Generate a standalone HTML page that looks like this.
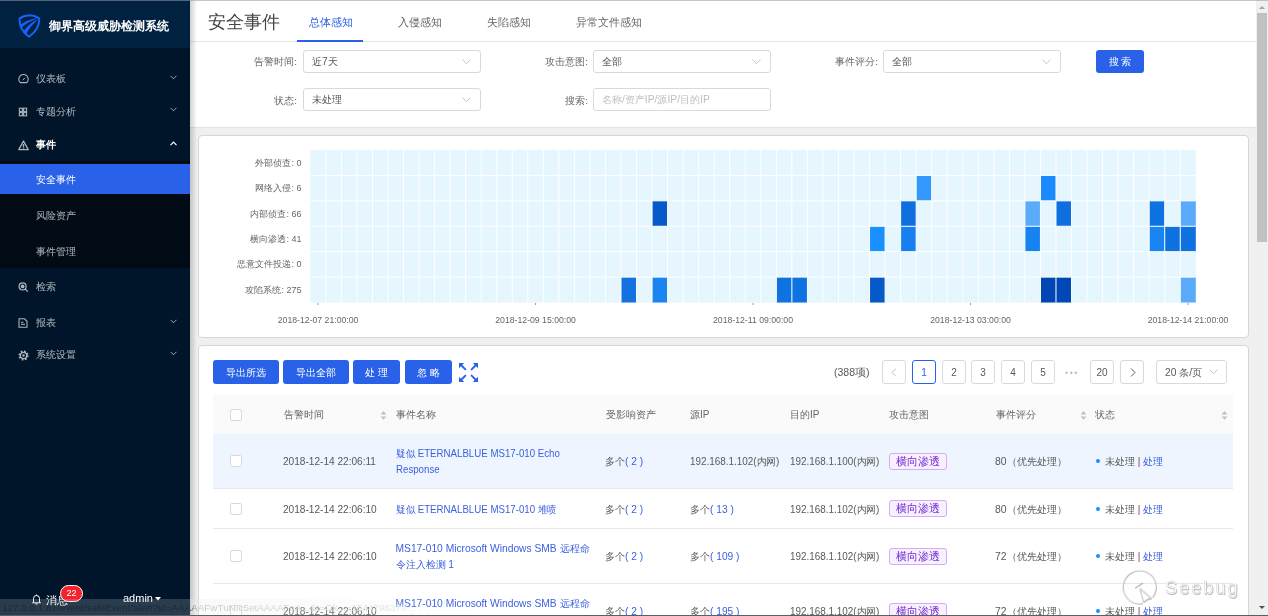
<!DOCTYPE html>
<html><head><meta charset="utf-8">
<style>
*{box-sizing:border-box;margin:0;padding:0}
html,body{width:1268px;height:616px;overflow:hidden;background:#f0f0f0;font-family:"Liberation Sans",sans-serif;color:#595959;position:relative}
.abs{position:absolute}
#side{position:absolute;left:0;top:0;width:190px;height:616px;background:#001529}
#logo{position:absolute;left:0;top:0;width:190px;height:48px;background:#00213f}
#logo .t{position:absolute;left:49px;top:18.7px;font-size:11.7px;font-weight:bold;color:#fff;white-space:nowrap;line-height:14px}
#side .tx{position:absolute;left:36px;font-size:10.1px;line-height:14px;white-space:nowrap}
#side .ic{position:absolute;left:18px;line-height:0}
#side .chev{position:absolute;left:170px;line-height:0}
#sub{position:absolute;left:0;top:161px;width:190px;height:107px;background:#000b16}
#act{position:absolute;left:0;top:164px;width:190px;height:30px;background:#2962e8}
#top{position:absolute;left:190px;top:0;width:1066px;height:128px;background:#fff;border-bottom:1px solid #dce2ee}
#tabline{position:absolute;left:190px;top:41px;width:1066px;height:1px;background:#e6e6e6}
#shadow{position:absolute;left:190px;top:0;width:7px;height:616px;background:linear-gradient(to right,rgba(0,0,0,0.18),rgba(0,0,0,0))}
.card{position:absolute;background:#fff;border:1px solid #d6d6d6;border-radius:4px}
.sel{position:absolute;height:23px;border:1px solid #d9d9d9;border-radius:3px;background:#fff;font-size:10.3px;line-height:22.5px;padding-left:8px;color:#595959;white-space:nowrap}
.sel svg{position:absolute;right:9px;top:8px}
.lbl{position:absolute;font-size:9.9px;line-height:14px;color:#666;white-space:nowrap;text-align:right;width:80px}
.btn{position:absolute;background:#2962e8;color:#fff;border-radius:3px;font-size:10.1px;text-align:center;white-space:nowrap;height:24px;line-height:25px}
.tab{position:absolute;top:15.4px;font-size:10.65px;line-height:14px;color:#666;white-space:nowrap}
.ylab{position:absolute;right:966.5px;font-size:9px;line-height:12px;color:#666;white-space:nowrap;text-align:right}
.xlab{position:absolute;top:314px;width:120px;text-align:center;font-size:8.7px;line-height:12px;color:#666;white-space:nowrap}
.pg{position:absolute;top:360px;width:24px;height:24px;border:1px solid #d9d9d9;border-radius:3px;background:#fff;font-size:10px;line-height:24px;text-align:center;color:#595959}
.th{position:absolute;top:408px;font-size:10px;line-height:14px;color:#666;white-space:nowrap}
.td{position:absolute;font-size:10.2px;line-height:15.5px;color:#595959;white-space:nowrap}
.link{color:#3a5fe0}
.num{color:#3a5fe0}
.cb{position:absolute;left:230px;width:12px;height:12px;border:1px solid #d9d9d9;border-radius:2px;background:#fff}
.tag{position:absolute;left:889px;width:58px;height:17px;border:1px solid #d3adf7;background:#f9f0ff;color:#722ed1;border-radius:3px;font-size:10.7px;line-height:15px;text-align:center;white-space:nowrap}
.dot{position:absolute;left:1096px;width:4px;height:4px;border-radius:50%;background:#1890ff}
.sorter{position:absolute;top:410px;line-height:0}
#wrap{position:absolute;left:0;top:0;width:1268px;height:616px;will-change:transform}
</style></head><body><div id="wrap">
<div id="side">
  <div id="logo">
    <svg class="abs" style="left:18px;top:14px" width="23" height="24" viewBox="0 0 23 24">
      <path d="M11.5 1.2 C7 1.5 3.5 3 1.5 4.5 C1.3 10 3 17 11 22.8 C19 17 21.5 10 21.3 4.5 C19.5 3 16 1.5 11.5 1.2 Z" fill="none" stroke="#1762ff" stroke-width="1.9"/>
      <path d="M1.6 11.8 C6 7.8 12 5 19.8 4.3 C13.5 6.8 7.5 10 2.3 14.6 Z" fill="#1762ff"/>
      <path d="M4.8 18.6 C8.5 12.5 13.5 7.8 20.3 5.2 C15.5 9.2 11.2 14 7.8 20.8 Z" fill="#1762ff"/>
    </svg>
    <div class="t">御界高级威胁检测系统</div>
  </div>
  <div id="sub"></div>
  <div id="act"></div>
  <div class="tx" style="top:72.0px;color:rgba(255,255,255,0.68);font-weight:normal">仪表板</div><div class="ic" style="top:74.0px;color:rgba(255,255,255,0.68)"><svg width="11" height="10" viewBox="0 0 11 10"><path d="M2.2 8.6 Q0.8 7.4 0.8 5.2 A4.7 4.7 0 0 1 10.2 5.2 Q10.2 7.4 8.8 8.6 Z" fill="none" stroke="currentColor" stroke-width="1.1"/><path d="M4.8 6.2 L6.8 3.8" stroke="currentColor" stroke-width="1"/></svg></div><div class="chev" style="top:74.5px;color:rgba(255,255,255,0.6)"><svg width="7" height="5" viewBox="0 0 7 5"><path d="M0.5 0.8 L3.5 3.8 L6.5 0.8" fill="none" stroke="currentColor" stroke-width="1"/></svg></div><div class="tx" style="top:104.9px;color:rgba(255,255,255,0.68);font-weight:normal">专题分析</div><div class="ic" style="top:106.9px;color:rgba(255,255,255,0.68)"><svg width="10" height="10" viewBox="0 0 10 10"><rect x="1.4" y="1.2" width="3" height="3.2" fill="none" stroke="currentColor" stroke-width="1.1"/><rect x="5.6" y="1.2" width="3" height="3.2" fill="none" stroke="currentColor" stroke-width="1.1"/><rect x="1.4" y="5.6" width="3" height="3.2" fill="none" stroke="currentColor" stroke-width="1.1"/><rect x="5.6" y="5.6" width="3" height="3.2" fill="none" stroke="currentColor" stroke-width="1.1"/></svg></div><div class="chev" style="top:107.4px;color:rgba(255,255,255,0.6)"><svg width="7" height="5" viewBox="0 0 7 5"><path d="M0.5 0.8 L3.5 3.8 L6.5 0.8" fill="none" stroke="currentColor" stroke-width="1"/></svg></div><div class="tx" style="top:137.7px;color:#fff;font-weight:bold">事件</div><div class="ic" style="top:139.7px;color:rgba(255,255,255,0.68)"><svg width="11" height="11" viewBox="0 0 11 11"><path d="M5.5 1 L10.2 9.6 L0.8 9.6 Z" fill="none" stroke="currentColor" stroke-width="1.3" stroke-linejoin="round"/><rect x="4.8" y="4" width="1.4" height="2.8" fill="currentColor"/><rect x="4.8" y="7.4" width="1.4" height="1.2" fill="currentColor"/></svg></div><div class="chev" style="top:141.2px;color:#fff"><svg width="7" height="5" viewBox="0 0 7 5"><path d="M0.5 4.2 L3.5 1.2 L6.5 4.2" fill="none" stroke="currentColor" stroke-width="1.2"/></svg></div><div class="tx" style="top:172.8px;color:#fff;font-weight:normal">安全事件</div><div class="tx" style="top:208.7px;color:rgba(255,255,255,0.68);font-weight:normal">风险资产</div><div class="tx" style="top:244.5px;color:rgba(255,255,255,0.68);font-weight:normal">事件管理</div><div class="tx" style="top:280.4px;color:rgba(255,255,255,0.68);font-weight:normal">检索</div><div class="ic" style="top:282.4px;color:rgba(255,255,255,0.68)"><svg width="11" height="10" viewBox="0 0 11 10"><circle cx="4.6" cy="4.4" r="3.5" fill="none" stroke="currentColor" stroke-width="1.2"/><circle cx="4.6" cy="4.4" r="1.9" fill="currentColor"/><path d="M7.2 7 L9.8 9.6" stroke="currentColor" stroke-width="1.2"/></svg></div><div class="tx" style="top:316.0px;color:rgba(255,255,255,0.68);font-weight:normal">报表</div><div class="ic" style="top:318.0px;color:rgba(255,255,255,0.68)"><svg width="10" height="10" viewBox="0 0 10 10"><path d="M1 0.8 L6.5 0.8 L9 3.3 L9 9.3 L1 9.3 Z" fill="none" stroke="currentColor" stroke-width="1.1"/><rect x="3" y="3.8" width="2.5" height="1" fill="currentColor"/><rect x="3" y="5.8" width="4" height="1" fill="currentColor"/></svg></div><div class="chev" style="top:318.5px;color:rgba(255,255,255,0.6)"><svg width="7" height="5" viewBox="0 0 7 5"><path d="M0.5 0.8 L3.5 3.8 L6.5 0.8" fill="none" stroke="currentColor" stroke-width="1"/></svg></div><div class="tx" style="top:348.0px;color:rgba(255,255,255,0.68);font-weight:normal">系统设置</div><div class="ic" style="top:350.0px;color:rgba(255,255,255,0.68)"><svg width="11" height="11" viewBox="0 0 11 11"><circle cx="5.5" cy="5.5" r="4.3" fill="none" stroke="currentColor" stroke-width="1.6" stroke-dasharray="1.7 1.68"/><circle cx="5.5" cy="5.5" r="3.2" fill="none" stroke="currentColor" stroke-width="1.3"/><circle cx="5.5" cy="5.5" r="1.2" fill="currentColor"/></svg></div><div class="chev" style="top:350.5px;color:rgba(255,255,255,0.6)"><svg width="7" height="5" viewBox="0 0 7 5"><path d="M0.5 0.8 L3.5 3.8 L6.5 0.8" fill="none" stroke="currentColor" stroke-width="1"/></svg></div>
  <svg class="abs" style="left:32px;top:594px" width="9" height="11" viewBox="0 0 9 11"><path d="M1.5 8 L1.5 4.5 A3 3 0 0 1 7.5 4.5 L7.5 8 L8.5 8.8 L0.5 8.8 Z" fill="none" stroke="#fff" stroke-width="1"/><path d="M3.5 10 L5.5 10" stroke="#fff" stroke-width="1"/><path d="M4.5 0.5 L4.5 1.6" stroke="#fff" stroke-width="1"/></svg>
  <div class="abs" style="left:46px;top:593px;font-size:10.7px;line-height:14px;color:#fff;white-space:nowrap">消息</div>
  <div class="abs" style="left:60px;top:585px;width:23px;height:17px;border-radius:9px;background:#f5222d;border:1px solid #fff;color:#fff;font-size:9px;line-height:15px;text-align:center">22</div>
  <div class="abs" style="left:123px;top:591px;font-size:11px;line-height:14px;color:#fff;white-space:nowrap">admin</div>
  <svg class="abs" style="left:155px;top:597px" width="6" height="4" viewBox="0 0 6 4"><path d="M0 0 L6 0 L3 3.5 Z" fill="#fff"/></svg>
</div>
<div id="top"></div>
<div id="tabline"></div>
<div class="abs" style="left:208px;top:11px;font-size:17.7px;line-height:22px;color:#444;white-space:nowrap">安全事件</div>
<div class="tab" style="left:308.5px;color:#2962e8">总体感知</div>
<div class="abs" style="left:297px;top:40px;width:66px;height:2px;background:#2962e8"></div>
<div class="tab" style="left:397.5px">入侵感知</div>
<div class="tab" style="left:486.5px">失陷感知</div>
<div class="tab" style="left:575.5px">异常文件感知</div>

<div class="lbl" style="left:217px;top:55px">告警时间:</div>
<div class="sel" style="left:303px;top:50px;width:178px">近7天<svg width="9" height="6" viewBox="0 0 9 6"><path d="M0.5 0.5 L4.5 4.8 L8.5 0.5" fill="none" stroke="#bfbfbf" stroke-width="0.9"/></svg></div>
<div class="lbl" style="left:508px;top:55px">攻击意图:</div>
<div class="sel" style="left:593px;top:50px;width:178px">全部<svg width="9" height="6" viewBox="0 0 9 6"><path d="M0.5 0.5 L4.5 4.8 L8.5 0.5" fill="none" stroke="#bfbfbf" stroke-width="0.9"/></svg></div>
<div class="lbl" style="left:798px;top:55px">事件评分:</div>
<div class="sel" style="left:883px;top:50px;width:178px">全部<svg width="9" height="6" viewBox="0 0 9 6"><path d="M0.5 0.5 L4.5 4.8 L8.5 0.5" fill="none" stroke="#bfbfbf" stroke-width="0.9"/></svg></div>
<div class="btn" style="left:1096px;top:50px;width:48px;height:23px;line-height:23px">搜 索</div>
<div class="lbl" style="left:217px;top:94px">状态:</div>
<div class="sel" style="left:303px;top:88px;width:178px">未处理<svg width="9" height="6" viewBox="0 0 9 6"><path d="M0.5 0.5 L4.5 4.8 L8.5 0.5" fill="none" stroke="#bfbfbf" stroke-width="0.9"/></svg></div>
<div class="lbl" style="left:508px;top:94px">搜索:</div>
<div class="sel" style="left:593px;top:88px;width:178px;color:#bfbfbf">名称/资产IP/源IP/目的IP</div>

<div id="shadow"></div>

<div class="card" style="left:198px;top:135px;width:1051px;height:203px"></div>
<svg class="abs" style="left:0;top:0" width="1268" height="616" viewBox="0 0 1268 616">
<rect x="310.3" y="150.0" width="885.50" height="152.52" fill="#e6f6fe"/>
<rect x="916.16" y="175.42" width="15.54" height="25.42" fill="#3399ff"/>
<rect x="1040.44" y="175.42" width="15.54" height="25.42" fill="#1a8aff"/>
<rect x="652.07" y="200.84" width="15.54" height="25.42" fill="#0559c9"/>
<rect x="900.63" y="200.84" width="15.54" height="25.42" fill="#0e6fdf"/>
<rect x="1024.91" y="200.84" width="15.54" height="25.42" fill="#5aacfa"/>
<rect x="1055.98" y="200.84" width="15.54" height="25.42" fill="#0f6fe0"/>
<rect x="1149.19" y="200.84" width="15.54" height="25.42" fill="#0f72e2"/>
<rect x="1180.26" y="200.84" width="15.54" height="25.42" fill="#5aacfa"/>
<rect x="869.56" y="226.26" width="15.54" height="25.42" fill="#1890ff"/>
<rect x="900.63" y="226.26" width="15.54" height="25.42" fill="#1780f0"/>
<rect x="1024.91" y="226.26" width="15.54" height="25.42" fill="#1683f0"/>
<rect x="1149.19" y="226.26" width="15.54" height="25.42" fill="#1985f2"/>
<rect x="1164.72" y="226.26" width="15.54" height="25.42" fill="#0e72e0"/>
<rect x="1180.26" y="226.26" width="15.54" height="25.42" fill="#0e72e0"/>
<rect x="621.00" y="277.10" width="15.54" height="25.42" fill="#1371e0"/>
<rect x="652.07" y="277.10" width="15.54" height="25.42" fill="#1a85f0"/>
<rect x="776.35" y="277.10" width="15.54" height="25.42" fill="#0e72e0"/>
<rect x="791.88" y="277.10" width="15.54" height="25.42" fill="#0e72e0"/>
<rect x="869.56" y="277.10" width="15.54" height="25.42" fill="#0559c8"/>
<rect x="1040.44" y="277.10" width="15.54" height="25.42" fill="#0047b3"/>
<rect x="1055.98" y="277.10" width="15.54" height="25.42" fill="#0049b5"/>
<rect x="1180.26" y="277.10" width="15.54" height="25.42" fill="#5aacfa"/>
<rect x="325.34" y="150.0" width="1" height="152.52" fill="#fff"/>
<rect x="340.87" y="150.0" width="1" height="152.52" fill="#fff"/>
<rect x="356.41" y="150.0" width="1" height="152.52" fill="#fff"/>
<rect x="371.94" y="150.0" width="1" height="152.52" fill="#fff"/>
<rect x="387.48" y="150.0" width="1" height="152.52" fill="#fff"/>
<rect x="403.01" y="150.0" width="1" height="152.52" fill="#fff"/>
<rect x="418.55" y="150.0" width="1" height="152.52" fill="#fff"/>
<rect x="434.08" y="150.0" width="1" height="152.52" fill="#fff"/>
<rect x="449.62" y="150.0" width="1" height="152.52" fill="#fff"/>
<rect x="465.15" y="150.0" width="1" height="152.52" fill="#fff"/>
<rect x="480.69" y="150.0" width="1" height="152.52" fill="#fff"/>
<rect x="496.22" y="150.0" width="1" height="152.52" fill="#fff"/>
<rect x="511.75" y="150.0" width="1" height="152.52" fill="#fff"/>
<rect x="527.29" y="150.0" width="1" height="152.52" fill="#fff"/>
<rect x="542.83" y="150.0" width="1" height="152.52" fill="#fff"/>
<rect x="558.36" y="150.0" width="1" height="152.52" fill="#fff"/>
<rect x="573.89" y="150.0" width="1" height="152.52" fill="#fff"/>
<rect x="589.43" y="150.0" width="1" height="152.52" fill="#fff"/>
<rect x="604.97" y="150.0" width="1" height="152.52" fill="#fff"/>
<rect x="620.50" y="150.0" width="1" height="152.52" fill="#fff"/>
<rect x="636.04" y="150.0" width="1" height="152.52" fill="#fff"/>
<rect x="651.57" y="150.0" width="1" height="152.52" fill="#fff"/>
<rect x="667.11" y="150.0" width="1" height="152.52" fill="#fff"/>
<rect x="682.64" y="150.0" width="1" height="152.52" fill="#fff"/>
<rect x="698.17" y="150.0" width="1" height="152.52" fill="#fff"/>
<rect x="713.71" y="150.0" width="1" height="152.52" fill="#fff"/>
<rect x="729.25" y="150.0" width="1" height="152.52" fill="#fff"/>
<rect x="744.78" y="150.0" width="1" height="152.52" fill="#fff"/>
<rect x="760.32" y="150.0" width="1" height="152.52" fill="#fff"/>
<rect x="775.85" y="150.0" width="1" height="152.52" fill="#fff"/>
<rect x="791.38" y="150.0" width="1" height="152.52" fill="#fff"/>
<rect x="806.92" y="150.0" width="1" height="152.52" fill="#fff"/>
<rect x="822.45" y="150.0" width="1" height="152.52" fill="#fff"/>
<rect x="837.99" y="150.0" width="1" height="152.52" fill="#fff"/>
<rect x="853.53" y="150.0" width="1" height="152.52" fill="#fff"/>
<rect x="869.06" y="150.0" width="1" height="152.52" fill="#fff"/>
<rect x="884.60" y="150.0" width="1" height="152.52" fill="#fff"/>
<rect x="900.13" y="150.0" width="1" height="152.52" fill="#fff"/>
<rect x="915.66" y="150.0" width="1" height="152.52" fill="#fff"/>
<rect x="931.20" y="150.0" width="1" height="152.52" fill="#fff"/>
<rect x="946.74" y="150.0" width="1" height="152.52" fill="#fff"/>
<rect x="962.27" y="150.0" width="1" height="152.52" fill="#fff"/>
<rect x="977.81" y="150.0" width="1" height="152.52" fill="#fff"/>
<rect x="993.34" y="150.0" width="1" height="152.52" fill="#fff"/>
<rect x="1008.88" y="150.0" width="1" height="152.52" fill="#fff"/>
<rect x="1024.41" y="150.0" width="1" height="152.52" fill="#fff"/>
<rect x="1039.94" y="150.0" width="1" height="152.52" fill="#fff"/>
<rect x="1055.48" y="150.0" width="1" height="152.52" fill="#fff"/>
<rect x="1071.02" y="150.0" width="1" height="152.52" fill="#fff"/>
<rect x="1086.55" y="150.0" width="1" height="152.52" fill="#fff"/>
<rect x="1102.09" y="150.0" width="1" height="152.52" fill="#fff"/>
<rect x="1117.62" y="150.0" width="1" height="152.52" fill="#fff"/>
<rect x="1133.15" y="150.0" width="1" height="152.52" fill="#fff"/>
<rect x="1148.69" y="150.0" width="1" height="152.52" fill="#fff"/>
<rect x="1164.22" y="150.0" width="1" height="152.52" fill="#fff"/>
<rect x="1179.76" y="150.0" width="1" height="152.52" fill="#fff"/>
<rect x="310.3" y="174.92" width="885.50" height="1" fill="#fff"/>
<rect x="310.3" y="200.34" width="885.50" height="1" fill="#fff"/>
<rect x="310.3" y="225.76" width="885.50" height="1" fill="#fff"/>
<rect x="310.3" y="251.18" width="885.50" height="1" fill="#fff"/>
<rect x="310.3" y="276.60" width="885.50" height="1" fill="#fff"/>
<rect x="317.57" y="303.02" width="1" height="2" fill="#999"/>
<rect x="535.06" y="303.02" width="1" height="2" fill="#999"/>
<rect x="752.55" y="303.02" width="1" height="2" fill="#999"/>
<rect x="970.04" y="303.02" width="1" height="2" fill="#999"/>
<rect x="1187.53" y="303.02" width="1" height="2" fill="#999"/>
</svg>
<div class="ylab" style="top:156.7px">外部侦查: 0</div><div class="ylab" style="top:182.1px">网络入侵: 6</div><div class="ylab" style="top:207.6px">内部侦查: 66</div><div class="ylab" style="top:233.0px">横向渗透: 41</div><div class="ylab" style="top:258.4px">恶意文件投递: 0</div><div class="ylab" style="top:283.8px">攻陷系统: 275</div>
<div class="xlab" style="left:258.1px">2018-12-07 21:00:00</div><div class="xlab" style="left:475.6px">2018-12-09 15:00:00</div><div class="xlab" style="left:693.0px">2018-12-11 09:00:00</div><div class="xlab" style="left:910.5px">2018-12-13 03:00:00</div><div class="xlab" style="left:1128.0px">2018-12-14 21:00:00</div>

<div class="card" style="left:198px;top:345px;width:1051px;height:300px"></div>
<div class="btn" style="left:213px;top:360px;width:66px">导出所选</div>
<div class="btn" style="left:283px;top:360px;width:66px">导出全部</div>
<div class="btn" style="left:353px;top:360px;width:47px">处 理</div>
<div class="btn" style="left:405px;top:360px;width:47px">忽 略</div>
<svg class="abs" style="left:459px;top:363px" width="19" height="19" viewBox="0 0 19 19">
 <g fill="#2962e8"><path d="M0 0 L5.2 0 L0 5.2 Z"/><path d="M19 0 L13.8 0 L19 5.2 Z"/><path d="M0 19 L5.2 19 L0 13.8 Z"/><path d="M19 19 L13.8 19 L19 13.8 Z"/></g>
 <g stroke="#2962e8" stroke-width="1.9" stroke-linecap="round"><path d="M2 2 L6.4 6.4"/><path d="M17 2 L12.6 6.4"/><path d="M2 17 L6.4 12.6"/><path d="M17 17 L12.6 12.6"/></g>
 </svg>

<div class="abs" style="left:834px;top:365px;font-size:10.5px;line-height:14px;color:#595959;white-space:nowrap">(388项)</div>
<div class="pg" style="left:882px"><svg width="6" height="9" viewBox="0 0 6 9" style="position:absolute;left:8px;top:7px"><path d="M5 0.5 L1 4.5 L5 8.5" fill="none" stroke="#c0c0c0" stroke-width="1"/></svg></div>
<div class="pg" style="left:912px;border-color:#2962e8;color:#2962e8">1</div>
<div class="pg" style="left:942px">2</div>
<div class="pg" style="left:971px">3</div>
<div class="pg" style="left:1001px">4</div>
<div class="pg" style="left:1031px">5</div>
<div class="abs" style="left:1065px;top:365.5px;font-size:9px;line-height:14px;color:#bfbfbf;letter-spacing:1.5px">•••</div>
<div class="pg" style="left:1090px">20</div>
<div class="pg" style="left:1120px"><svg width="6" height="9" viewBox="0 0 6 9" style="position:absolute;left:9px;top:7px"><path d="M1 0.5 L5 4.5 L1 8.5" fill="none" stroke="#595959" stroke-width="1"/></svg></div>
<div class="sel" style="left:1156px;top:360px;width:71px;height:24px;line-height:24px">20 条/页<svg width="9" height="6" viewBox="0 0 9 6" style="top:8px;right:8px"><path d="M0.5 0.5 L4.5 4.8 L8.5 0.5" fill="none" stroke="#bfbfbf" stroke-width="0.9"/></svg></div>

<div class="abs" style="left:213px;top:394.5px;width:1020px;height:39px;background:#fafafa"></div>
<div class="cb" style="top:409px"></div>
<div class="th" style="left:283.5px">告警时间</div>
<div class="sorter" style="left:380px"><svg width="7" height="11" viewBox="0 0 7 11"><path d="M0.6 4.4 L3.5 1 L6.4 4.4 Z" fill="#bfbfbf"/><path d="M0.6 6.4 L3.5 9.8 L6.4 6.4 Z" fill="#bfbfbf"/></svg></div>
<div class="th" style="left:395.5px">事件名称</div>
<div class="th" style="left:605.5px">受影响资产</div>
<div class="th" style="left:690px">源IP</div>
<div class="th" style="left:790px">目的IP</div>
<div class="th" style="left:889px">攻击意图</div>
<div class="th" style="left:995.5px">事件评分</div>
<div class="sorter" style="left:1079.5px"><svg width="7" height="11" viewBox="0 0 7 11"><path d="M0.6 4.4 L3.5 1 L6.4 4.4 Z" fill="#bfbfbf"/><path d="M0.6 6.4 L3.5 9.8 L6.4 6.4 Z" fill="#bfbfbf"/></svg></div>
<div class="th" style="left:1095px">状态</div>
<div class="sorter" style="left:1220.5px"><svg width="7" height="11" viewBox="0 0 7 11"><path d="M0.6 4.4 L3.5 1 L6.4 4.4 Z" fill="#bfbfbf"/><path d="M0.6 6.4 L3.5 9.8 L6.4 6.4 Z" fill="#bfbfbf"/></svg></div>
<div class="abs" style="left:213px;top:433.5px;width:1020px;height:55.0px;background:#eef5fe;border-bottom:1px solid #e8e8e8"></div><div class="cb" style="top:455.0px"></div><div class="td" style="left:283px;top:454.0px;font-size:10.1px">2018-12-14 22:06:11</div><div class="td link" style="left:395.5px;top:446.0px;font-size:10.2px;transform-origin:0 0;transform:scaleX(0.951)">疑似 ETERNALBLUE MS17-010 Echo<br>Response</div><div class="td" style="left:605px;top:454.0px">多个<span class="num">( 2 )</span></div><div class="td" style="left:690px;top:454.0px;font-size:10.2px;transform-origin:0 0;transform:scaleX(0.972)">192.168.1.102(内网)</div><div class="td" style="left:790px;top:454.0px;font-size:10.2px;transform-origin:0 0;transform:scaleX(0.972)">192.168.1.100(内网)</div><div class="tag" style="top:452.5px">横向渗透</div><div class="td" style="left:995px;top:454.0px;font-size:10.4px">80（优先处理）</div><div class="dot" style="top:459.0px"></div><div class="td" style="left:1105px;top:454.0px;font-size:10px">未处理 <span style="color:#7a3e55">|</span> <span class="link">处理</span></div><div class="abs" style="left:213px;top:488.5px;width:1020px;height:40.0px;background:#fff;border-bottom:1px solid #e8e8e8"></div><div class="cb" style="top:502.5px"></div><div class="td" style="left:283px;top:501.5px;font-size:10.1px">2018-12-14 22:06:10</div><div class="td link" style="left:395.5px;top:501.5px;font-size:10.2px;transform-origin:0 0;transform:scaleX(0.951)">疑似 ETERNALBLUE MS17-010 堆喷</div><div class="td" style="left:605px;top:501.5px">多个<span class="num">( 2 )</span></div><div class="td" style="left:690px;top:501.5px">多个<span class="num">( 13 )</span></div><div class="td" style="left:790px;top:501.5px;font-size:10.2px;transform-origin:0 0;transform:scaleX(0.972)">192.168.1.102(内网)</div><div class="tag" style="top:500.0px">横向渗透</div><div class="td" style="left:995px;top:501.5px;font-size:10.4px">80（优先处理）</div><div class="dot" style="top:506.5px"></div><div class="td" style="left:1105px;top:501.5px;font-size:10px">未处理 <span style="color:#7a3e55">|</span> <span class="link">处理</span></div><div class="abs" style="left:213px;top:528.5px;width:1020px;height:55.0px;background:#fff;border-bottom:1px solid #e8e8e8"></div><div class="cb" style="top:550.0px"></div><div class="td" style="left:283px;top:549.0px;font-size:10.1px">2018-12-14 22:06:10</div><div class="td link" style="left:395.5px;top:541.0px;font-size:10.25px;transform-origin:0 0;transform:scaleX(1)">MS17-010 Microsoft Windows SMB 远程命<br>令注入检测 1</div><div class="td" style="left:605px;top:549.0px">多个<span class="num">( 2 )</span></div><div class="td" style="left:690px;top:549.0px">多个<span class="num">( 109 )</span></div><div class="td" style="left:790px;top:549.0px;font-size:10.2px;transform-origin:0 0;transform:scaleX(0.972)">192.168.1.102(内网)</div><div class="tag" style="top:547.5px">横向渗透</div><div class="td" style="left:995px;top:549.0px;font-size:10.4px">72（优先处理）</div><div class="dot" style="top:554.0px"></div><div class="td" style="left:1105px;top:549.0px;font-size:10px">未处理 <span style="color:#7a3e55">|</span> <span class="link">处理</span></div><div class="abs" style="left:213px;top:583.5px;width:1020px;height:56.5px;background:#fff;border-bottom:1px solid #e8e8e8"></div><div class="cb" style="top:605.0px"></div><div class="td" style="left:283px;top:604.0px;font-size:10.1px">2018-12-14 22:06:10</div><div class="td link" style="left:395.5px;top:596.0px;font-size:10.25px;transform-origin:0 0;transform:scaleX(1)">MS17-010 Microsoft Windows SMB 远程命<br>令注入检测 2</div><div class="td" style="left:605px;top:604.0px">多个<span class="num">( 2 )</span></div><div class="td" style="left:690px;top:604.0px">多个<span class="num">( 195 )</span></div><div class="td" style="left:790px;top:604.0px;font-size:10.2px;transform-origin:0 0;transform:scaleX(0.972)">192.168.1.102(内网)</div><div class="tag" style="top:602.5px">横向渗透</div><div class="td" style="left:995px;top:604.0px;font-size:10.4px">72（优先处理）</div><div class="dot" style="top:609.0px"></div><div class="td" style="left:1105px;top:604.0px;font-size:10px">未处理 <span style="color:#7a3e55">|</span> <span class="link">处理</span></div>

<div class="abs" style="left:1256px;top:0;width:12px;height:616px;background:#f0f0f0"></div>
<svg class="abs" style="left:1256px;top:0" width="12" height="616" viewBox="0 0 12 616">
 <path d="M3 9 L6 6 L9 9 Z" fill="#a3a3a3"/>
 <rect x="1" y="13" width="10" height="229" fill="#c1c1c1"/>
 <path d="M3 606 L9 606 L6 609 Z" fill="#505050"/>
</svg>

<div class="abs" style="left:0;top:0;width:1268px;height:1px;background:rgba(150,155,165,0.55)"></div>

<!-- status bar -->
<div class="abs" style="left:0;top:599px;width:480px;height:16px;background:linear-gradient(to right,rgba(190,200,210,0.22) 0,rgba(190,200,210,0.22) 190px,rgba(235,235,235,0.3) 191px,rgba(240,240,240,0) 480px)"></div>
<div class="abs" style="left:2px;top:601px;font-size:9.9px;line-height:13px;white-space:nowrap;background:linear-gradient(to right,#1c2733 0,#1c2733 186px,#c8c8c8 196px,#d6d6d6 330px,#f0f0f0 430px,rgba(255,255,255,0) 440px);-webkit-background-clip:text;color:transparent">127.0.0.1:81/event/safeEvent/alert?id=AAAAAFwTuNIc5etAAAAFnA...&amp;t=Ok...=1544796370...</div>
<div class="abs" style="left:0;top:615px;width:1268px;height:1px;background:#5a5f66"></div>

<!-- seebug watermark -->
<svg class="abs" style="left:1115px;top:562px" width="135" height="50" viewBox="0 0 135 50">
 <g fill="none" stroke="rgba(120,120,120,0.45)" stroke-width="1.6" transform="translate(0.6,0.6)">
  <path d="M37 35 A16.5 16.5 0 1 0 27 41"/>
  <path d="M19.5 25.5 L27.5 20.5"/>
  <path d="M24 25.5 L28 40 M24 25.5 L36 36 M28 40 L32 37 L36 36"/>
 </g>
 <g fill="none" stroke="rgba(255,255,255,0.9)" stroke-width="0.7">
  <path d="M37 35 A16.5 16.5 0 1 0 27 41"/>
  <path d="M24 25.5 L28 40 M24 25.5 L36 36"/>
 </g>
 <text x="50.8" y="32.8" font-family="Liberation Sans" font-size="18.5" letter-spacing="1.8" fill="rgba(130,130,130,0.5)">Seebug</text>
 <text x="50" y="32" font-family="Liberation Sans" font-size="18.5" letter-spacing="1.8" fill="rgba(255,255,255,0.95)" stroke="rgba(150,150,150,0.45)" stroke-width="0.5">Seebug</text>
</svg>
</div></body></html>
